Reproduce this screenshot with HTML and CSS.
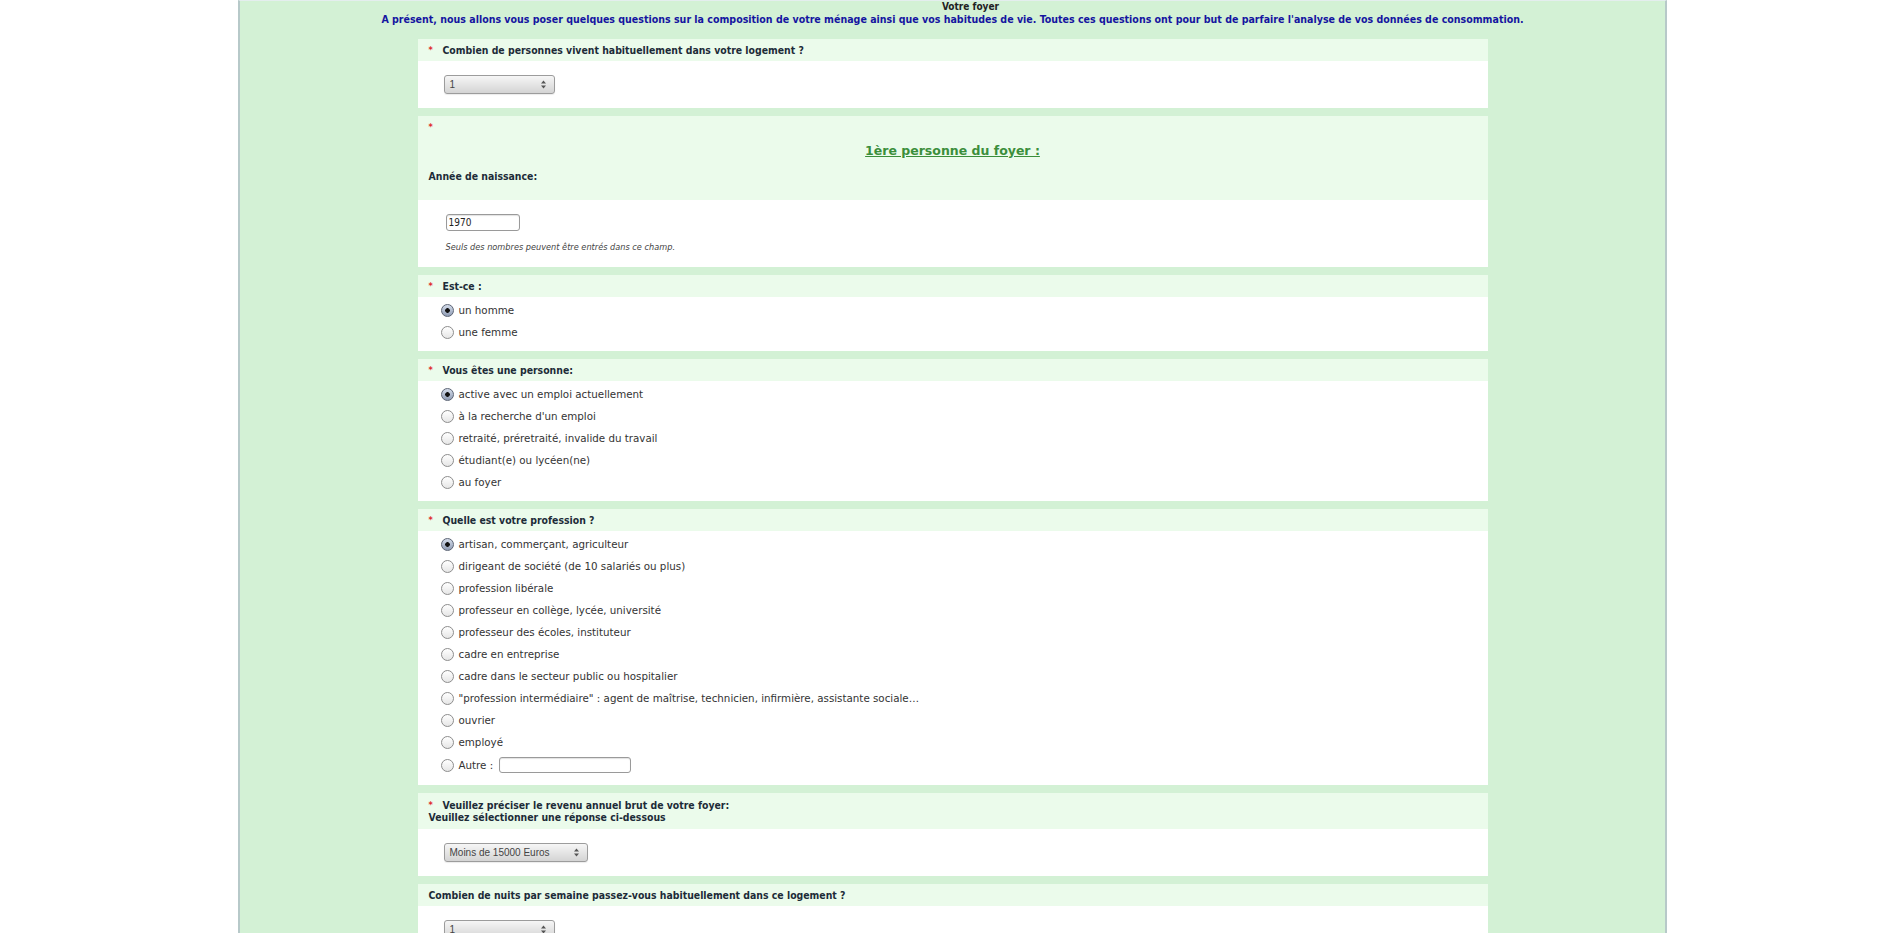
FILE: index.html
```html
<!DOCTYPE html>
<html lang="fr">
<head>
    <meta charset="UTF-8">
    <title>Votre foyer</title>
    <link rel="stylesheet" href="styles.css">
</head>
<body>
    <div class="page">
        <div class="intro">
            <div class="intro-title">Votre foyer</div>
            <div class="intro-text">A présent, nous allons vous poser quelques questions sur la composition de votre ménage ainsi que vos habitudes de vie. Toutes ces questions ont pour but de parfaire l'analyse de vos données de consommation.</div>
        </div>

        <div class="panel">
            <div class="panel-head"><span class="req">*</span>Combien de personnes vivent habituellement dans votre logement ?</div>
            <div class="panel-body">
                <div class="select">
                    <span>1</span>
                    <svg width="7" height="11" viewBox="0 0 7 11"><path d="M3.5 1.5 L6 4.5 H1 Z M1 6.5 H6 L3.5 9.5 Z" fill="#555"/></svg>
                </div>
            </div>
        </div>

        <div class="panel">
            <div class="panel-head panel-head-person">
                <div><span class="req">*</span></div>
                <div class="person-title">1ère personne du foyer :</div>
                <div class="person-label">Année de naissance:</div>
            </div>
            <div class="panel-body panel-body-year">
                <input type="text" class="text-input year-input" value="1970">
                <div class="help">Seuls des nombres peuvent être entrés dans ce champ.</div>
            </div>
        </div>

        <div class="panel">
            <div class="panel-head"><span class="req">*</span>Est-ce :</div>
            <div class="panel-body options">
                <label class="option"><input type="radio" name="sexe" checked>un homme</label>
                <label class="option"><input type="radio" name="sexe">une femme</label>
            </div>
        </div>

        <div class="panel">
            <div class="panel-head"><span class="req">*</span>Vous êtes une personne:</div>
            <div class="panel-body options">
                <label class="option"><input type="radio" name="statut" checked>active avec un emploi actuellement</label>
                <label class="option"><input type="radio" name="statut">à la recherche d'un emploi</label>
                <label class="option"><input type="radio" name="statut">retraité, préretraité, invalide du travail</label>
                <label class="option"><input type="radio" name="statut">étudiant(e) ou lycéen(ne)</label>
                <label class="option"><input type="radio" name="statut">au foyer</label>
            </div>
        </div>

        <div class="panel">
            <div class="panel-head"><span class="req">*</span>Quelle est votre profession ?</div>
            <div class="panel-body options">
                <label class="option"><input type="radio" name="pro" checked>artisan, commerçant, agriculteur</label>
                <label class="option"><input type="radio" name="pro">dirigeant de société (de 10 salariés ou plus)</label>
                <label class="option"><input type="radio" name="pro">profession libérale</label>
                <label class="option"><input type="radio" name="pro">professeur en collège, lycée, université</label>
                <label class="option"><input type="radio" name="pro">professeur des écoles, instituteur</label>
                <label class="option"><input type="radio" name="pro">cadre en entreprise</label>
                <label class="option"><input type="radio" name="pro">cadre dans le secteur public ou hospitalier</label>
                <label class="option"><input type="radio" name="pro">"profession intermédiaire" : agent de maîtrise, technicien, infirmière, assistante sociale…</label>
                <label class="option"><input type="radio" name="pro">ouvrier</label>
                <label class="option"><input type="radio" name="pro">employé</label>
                <label class="option option-other"><input type="radio" name="pro">Autre :<input type="text" class="text-input other-input"></label>
            </div>
        </div>

        <div class="panel">
            <div class="panel-head panel-head-double"><span class="req">*</span>Veuillez préciser le revenu annuel brut de votre foyer:<br>Veuillez sélectionner une réponse ci-dessous</div>
            <div class="panel-body">
                <div class="select select-wide">
                    <span>Moins de 15000 Euros</span>
                    <svg width="7" height="11" viewBox="0 0 7 11"><path d="M3.5 1.5 L6 4.5 H1 Z M1 6.5 H6 L3.5 9.5 Z" fill="#555"/></svg>
                </div>
            </div>
        </div>

        <div class="panel">
            <div class="panel-head">Combien de nuits par semaine passez-vous habituellement dans ce logement ?</div>
            <div class="panel-body">
                <div class="select">
                    <span>1</span>
                    <svg width="7" height="11" viewBox="0 0 7 11"><path d="M3.5 1.5 L6 4.5 H1 Z M1 6.5 H6 L3.5 9.5 Z" fill="#555"/></svg>
                </div>
            </div>
        </div>
    </div>
</body>
</html>
```

FILE: styles.css
```css
* {
    box-sizing: border-box;
}

body {
    margin: 0;
    padding: 0 0 0 7px;
    background: #fff;
    font-family: 'DejaVu Sans', Verdana, sans-serif;
    font-size: 10.3px;
    color: #333;
}

.page {
    width: 1429px;
    margin: 0 auto;
    min-height: 1200px;
    background: #d3f1d5;
    border-top: 1px solid #e4eeee;
    border-left: 2px solid #b7c9c9;
    border-right: 2px solid #b7c9c9;
    padding-bottom: 40px;
}

.intro {
    text-align: center;
    font-family: 'DejaVu Sans Condensed', 'DejaVu Sans', sans-serif;
    font-stretch: condensed;
    font-weight: bold;
    font-size: 10.55px;
    line-height: 12px;
    margin-bottom: 14px;
}

.intro-title {
    color: #222;
    font-size: 10px;
    padding-left: 36px;
}

.intro-text {
    color: #1515a0;
}

.panel {
    width: 1070px;
    margin: 0 auto 8px;
}

.panel-head {
    background: #ebfbeb;
    padding: 5px 11px;
    height: 22px;
    line-height: 12px;
    font-family: 'DejaVu Sans Condensed', 'DejaVu Sans', sans-serif;
    font-stretch: condensed;
    font-weight: bold;
    font-size: 10.4px;
    color: #1d2b38;
}

.panel-head-double {
    height: 36px;
    padding: 6px 11px;
}

.panel-head-person {
    height: 84px;
    padding: 5px 11px;
}

.req {
    display: inline-block;
    width: 14px;
    vertical-align: top;
    color: #e0282a;
    font-size: 9px;
}

.person-title {
    margin-top: 11px;
    text-align: center;
    font-family: 'DejaVu Sans', sans-serif;
    font-stretch: normal;
    font-size: 12.5px;
    line-height: 14px;
    color: #3b8e3b;
    text-decoration: underline;
}

.person-label {
    margin-top: 12px;
}

.panel-body {
    background: #fff;
    height: 47px;
    padding: 14px 26px;
}

.panel-body-year {
    height: 67px;
    padding: 14px 28px 0;
}

.select {
    width: 111px;
    height: 19px;
    display: flex;
    align-items: center;
    justify-content: space-between;
    padding: 0 7px 0 5px;
    border: 1px solid #9c9c9c;
    border-radius: 3px;
    background: linear-gradient(#f6f6f6, #d4d4d4);
    box-shadow: 0 1px 1px rgba(0, 0, 0, 0.08);
    font-family: 'Liberation Sans', Arial, sans-serif;
    font-size: 10px;
    color: #444;
}

.select-wide {
    width: 144px;
}

.text-input {
    height: 17px;
    border: 1px solid #9a9a9a;
    border-radius: 3px;
    background: #fff;
    box-shadow: inset 0 1px 1px rgba(0, 0, 0, 0.12);
    font-family: 'DejaVu Sans Condensed', 'DejaVu Sans', sans-serif;
    font-stretch: condensed;
    font-size: 10px;
    color: #222;
    padding: 0 2px;
    margin: 0;
    outline: none;
}

.year-input {
    display: block;
    width: 74px;
}

.help {
    margin-top: 10px;
    line-height: 12px;
    font-size: 8.2px;
    font-style: italic;
    color: #444;
}

.options {
    height: auto;
    padding: 2px 23px 8px;
}

.option {
    display: flex;
    align-items: center;
    height: 22px;
    color: #333;
}

.option-other {
    height: 24px;
}

.option input[type="radio"] {
    appearance: none;
    -webkit-appearance: none;
    flex: none;
    width: 13px;
    height: 13px;
    margin: 0 5px 0 0;
    border: 1px solid #8d8d8d;
    border-radius: 50%;
    background: linear-gradient(#fff, #e6e6e6);
}

.option input[type="radio"]:checked {
    border-color: #5c6474;
    background: radial-gradient(circle, #111 0 2px, transparent 2.6px), linear-gradient(#d4dcea, #8f9cb4);
}

.other-input {
    width: 132px;
    height: 16px;
    margin-left: 6px;
}
```
